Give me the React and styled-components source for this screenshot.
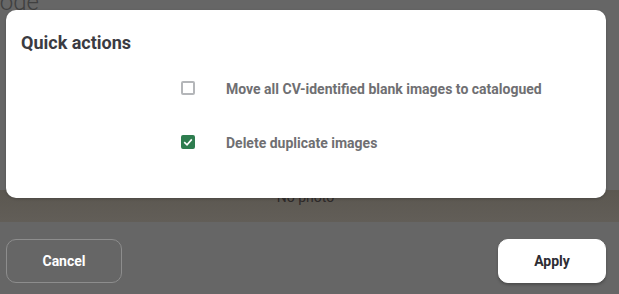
import React, { useState } from "react";
import styled, { createGlobalStyle } from "styled-components";

const GlobalStyle = createGlobalStyle`
  html, body {
    margin: 0;
    padding: 0;
    background: #666666;
    font-family: Roboto, "Liberation Sans", sans-serif;
  }
`;

const Page = styled.div`
  position: relative;
  width: 619px;
  height: 294px;
  overflow: hidden;
  background: #666666;
  display: flex;
  flex-direction: column;
`;

const Behind = styled.div`
  height: 222px;
  display: flex;
  flex-direction: column;
`;

const PageTitle = styled.div`
  margin: -12px 0 0 -48px;
  font-size: 24px;
  font-weight: 300;
  color: #404040;
  height: 202px;
`;

const PhotoStrip = styled.div`
  flex: 1;
  background: linear-gradient(#5b5750, #625e58);
  display: flex;
  justify-content: center;
  align-items: flex-start;
  padding-right: 8px;
  font-size: 14px;
  line-height: 15px;
  color: #2e2a2a;
`;

const Footer = styled.div`
  flex: 1;
  display: flex;
  justify-content: space-between;
  align-items: flex-start;
  padding: 17px 13px 0 6px;
`;

const Button = styled.button`
  height: 44px;
  width: ${(p) => p.w}px;
  border-radius: 10px;
  font-family: Roboto, "Liberation Sans", sans-serif;
  font-size: 14px;
  font-weight: 700;
  cursor: pointer;
  border: 1px solid ${(p) => (p.primary ? "#ffffff" : "#8d8d8d")};
  background: ${(p) => (p.primary ? "#ffffff" : "transparent")};
  color: ${(p) => (p.primary ? "#2d2d33" : "#ffffff")};
  box-shadow: ${(p) => (p.primary ? "0 2px 3px rgba(0,0,0,0.25)" : "none")};
`;

const Modal = styled.div`
  position: absolute;
  top: 10px;
  left: 6px;
  width: 600px;
  height: 188px;
  background: #ffffff;
  border-radius: 10px;
  box-shadow: 0 1px 3px rgba(0, 0, 0, 0.2);
  box-sizing: border-box;
  padding: 23px 15px 0;
`;

const Title = styled.h2`
  margin: 0;
  font-size: 18px;
  font-weight: 700;
  color: #3b3b42;
  line-height: 20px;
`;

const Options = styled.div`
  display: flex;
  flex-direction: column;
  gap: 26px;
  margin-top: 21px;
  padding-left: 160px;
`;

const Row = styled.label`
  display: flex;
  align-items: center;
  height: 28px;
  cursor: pointer;
`;

const Box = styled.span`
  width: 14px;
  height: 14px;
  box-sizing: border-box;
  border-radius: 2px;
  border: 2px solid ${(p) => (p.checked ? "#2e7d4f" : "#b4b6b9")};
  background: ${(p) => (p.checked ? "#2e7d4f" : "#ffffff")};
  display: flex;
  align-items: center;
  justify-content: center;
  margin-right: 31px;
`;

const Label = styled.span`
  font-size: 14px;
  font-weight: 700;
  color: #6f6f72;
  margin-top: 2px;
`;

const options = [
  { id: "blank", text: "Move all CV-identified blank images to catalogued" },
  { id: "dupes", text: "Delete duplicate images" },
];

export default function App() {
  const [checked, setChecked] = useState({ blank: false, dupes: true });

  return (
    <Page>
      <GlobalStyle />
      <Behind>
        <PageTitle>Barcode</PageTitle>
        <PhotoStrip>No photo</PhotoStrip>
      </Behind>
      <Footer>
        <Button w={116}>Cancel</Button>
        <Button w={108} primary>
          Apply
        </Button>
      </Footer>

      <Modal>
        <Title>Quick actions</Title>
        <Options>
          {options.map((o) => (
            <Row
              key={o.id}
              onClick={() => setChecked({ ...checked, [o.id]: !checked[o.id] })}
            >
              <Box checked={checked[o.id]}>
                {checked[o.id] && (
                  <svg width="10" height="10" viewBox="0 0 10 10">
                    <path
                      d="M1.2 5.2 L4 7.8 L8.8 2.4"
                      fill="none"
                      stroke="#fff"
                      strokeWidth="1.6"
                    />
                  </svg>
                )}
              </Box>
              <Label>{o.text}</Label>
            </Row>
          ))}
        </Options>
      </Modal>
    </Page>
  );
}
